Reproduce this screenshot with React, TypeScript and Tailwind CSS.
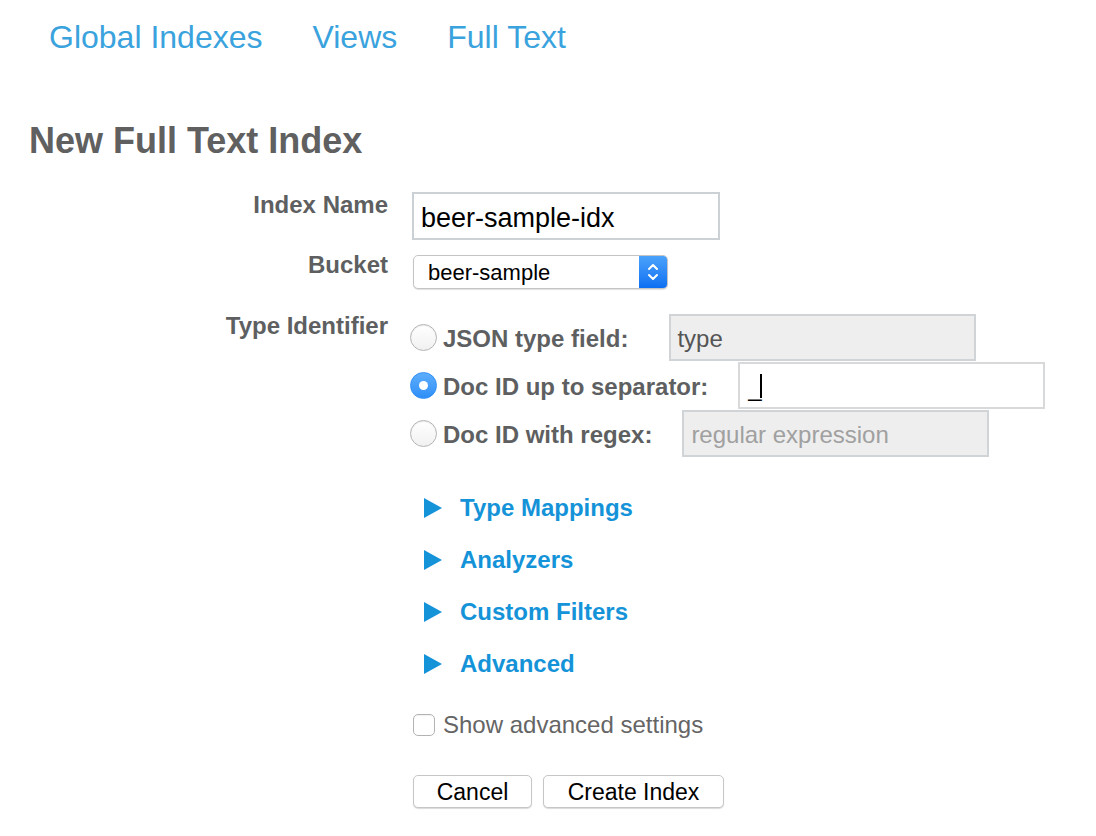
import React from 'react';

const navLinks = ['Global Indexes', 'Views', 'Full Text'];
const sections = ['Type Mappings', 'Analyzers', 'Custom Filters', 'Advanced'];

function Radio({ checked }: { checked?: boolean }) {
  if (checked) {
    return (
      <span className="flex h-[27px] w-[27px] shrink-0 items-center justify-center rounded-full border border-[#2f8ff5] bg-gradient-to-b from-[#5cadfc] to-[#2e8ff8]">
        <span className="h-[9px] w-[9px] rounded-full bg-white" />
      </span>
    );
  }
  return (
    <span className="h-[27px] w-[27px] shrink-0 rounded-full border border-[#b4b4b4] bg-gradient-to-b from-white to-[#f1f1f1] shadow-[inset_0_1px_1px_rgba(0,0,0,0.08)]" />
  );
}

function Label({ children, className = '' }: { children: React.ReactNode; className?: string }) {
  return (
    <div className={`w-[388px] shrink-0 text-right text-[24px] font-bold leading-[28px] text-[#5e5f61] ${className}`}>
      {children}
    </div>
  );
}

export default function App() {
  return (
    <div className="min-h-screen bg-white font-['Liberation_Sans',Arial,sans-serif]">
      {/* Tabs */}
      <nav className="flex gap-[50px] pl-[49px] pt-[19px]">
        {navLinks.map((link) => (
          <a key={link} className="text-[32px] leading-[36px] text-[#3aa3dd]">
            {link}
          </a>
        ))}
      </nav>

      <h1 className="mt-[65px] pl-[29px] text-[36px] font-bold leading-[42px] text-[#606060]">
        New Full Text Index
      </h1>

      <div className="mt-[28px] flex flex-col">
        {/* Index name */}
        <div className="flex items-start gap-[24px]">
          <Label className="pt-[1px]">Index Name</Label>
          <div className="mt-[2px] flex h-[48px] w-[308px] items-center border-2 border-[#cbd1d5] pl-[7px] pt-[4px] text-[27px] text-black">
            beer-sample-idx
          </div>
        </div>

        {/* Bucket */}
        <div className="mt-[11px] flex items-start gap-[24px]">
          <Label>Bucket</Label>
          <div className="ml-[1px] mt-[4px] flex h-[34px] w-[255px] overflow-hidden rounded-[5px] border border-[#c4c4c4] bg-white shadow-[0_1px_1px_rgba(0,0,0,0.12)]">
            <div className="flex flex-1 items-center pl-[14px] text-[22px] text-black">beer-sample</div>
            <div className="flex w-[28px] items-center justify-center bg-gradient-to-b from-[#4aa2fb] to-[#0b6ff2]">
              <svg width="14" height="22" viewBox="0 0 14 22" fill="none" stroke="white" strokeWidth="2" strokeLinecap="round" strokeLinejoin="round">
                <path d="M3 8l4-4 4 4" />
                <path d="M3 14l4 4 4-4" />
              </svg>
            </div>
          </div>
        </div>

        {/* Type identifier */}
        <div className="mt-[23px] flex items-start gap-[22px]">
          <Label>Type Identifier</Label>
          <div className="mt-[2px] flex flex-col gap-px">
            <div className="flex h-[47px] items-center">
              <Radio />
              <span className="ml-[6px] mt-[3px] text-[24px] font-bold text-[#5e5f61]">JSON type field:</span>
              <div className="ml-[41px] flex h-[47px] w-[307px] items-center border-2 border-[#d0d4d6] bg-[#eeeeee] pl-[6px] pt-[2px] text-[24px] text-[#555]">
                type
              </div>
            </div>
            <div className="flex h-[47px] items-center">
              <Radio checked />
              <span className="ml-[6px] mt-[3px] text-[24px] font-bold text-[#5e5f61]">Doc ID up to separator:</span>
              <div className="ml-[30px] flex h-[47px] w-[307px] items-center border-2 border-[#d7d9da] bg-white pl-[8px] text-[24px] text-black">
                <span className="mt-[4px]">_</span>
                <span className="ml-[-2px] h-[24px] w-[2px] bg-black" />
              </div>
            </div>
            <div className="flex h-[47px] items-center">
              <Radio />
              <span className="ml-[6px] mt-[3px] text-[24px] font-bold text-[#5e5f61]">Doc ID with regex:</span>
              <div className="ml-[30px] flex h-[47px] w-[307px] items-center border-2 border-[#d0d4d6] bg-[#eeeeee] pl-[7px] pt-[2px] text-[24px] text-[#a0a0a0]">
                regular expression
              </div>
            </div>
          </div>
        </div>

        {/* Collapsible sections */}
        <div className="ml-[424px] mt-[25px] flex flex-col">
          {sections.map((s) => (
            <div key={s} className="flex h-[52px] items-center">
              <svg width="18" height="20" viewBox="0 0 18 20" className="shrink-0">
                <path d="M0 0L18 10L0 20Z" fill="#1593d8" />
              </svg>
              <span className="ml-[18px] text-[24px] font-bold text-[#1593d8]">{s}</span>
            </div>
          ))}
        </div>

        {/* Advanced settings */}
        <div className="ml-[413px] mt-[21px] flex h-[28px] items-center">
          <span className="h-[22px] w-[22px] rounded-[5px] border border-[#b3b3b3] bg-white shadow-[inset_0_1px_1px_rgba(0,0,0,0.06)]" />
          <span className="ml-[8px] text-[24px] text-[#656565]">Show advanced settings</span>
        </div>

        {/* Actions */}
        <div className="ml-[413px] mt-[36px] flex gap-[11px]">
          <button className="h-[33px] w-[119px] rounded-[5px] border border-[#c6c6c6] bg-white pt-[2px] text-[23px] leading-none text-black shadow-[0_1px_1px_rgba(0,0,0,0.15)]">
            Cancel
          </button>
          <button className="h-[33px] w-[181px] rounded-[5px] border border-[#c6c6c6] bg-white pt-[2px] text-[23px] leading-none text-black shadow-[0_1px_1px_rgba(0,0,0,0.15)]">
            Create Index
          </button>
        </div>
      </div>
    </div>
  );
}
